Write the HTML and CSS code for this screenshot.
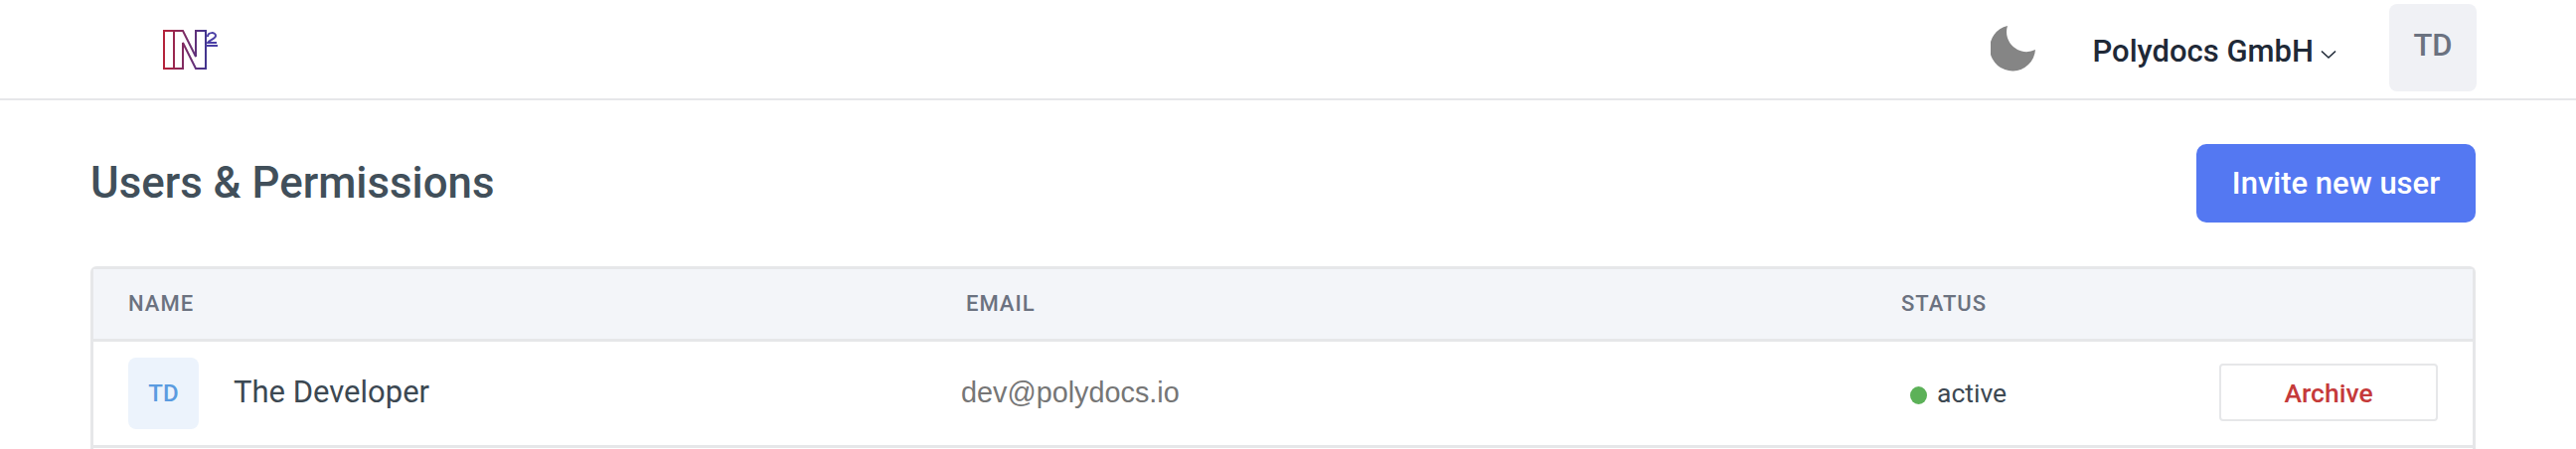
FILE: index.html
```html
<!DOCTYPE html>
<html>
<head>
    <title>Users &amp; Permissions</title>
    <link rel="stylesheet" href="styles.css">
</head>
<body>
    <header class="topbar">
        <a class="logo" href="#">
            <svg width="56" height="42" viewBox="0 0 56 42" fill="none">
                <defs>
                    <linearGradient id="logo-grad" x1="0" y1="0" x2="1" y2="0">
                        <stop offset="0" stop-color="#b5233a"/>
                        <stop offset="1" stop-color="#43358f"/>
                    </linearGradient>
                </defs>
                <path d="M1 2H11V40H1Z M11 40H20V14L33 40H43V2H33V28L20 2H11" stroke="url(#logo-grad)" stroke-width="2"/>
                <path d="M45 8C45 3 53 3 53 7C53 10 47 11 45 14H54" stroke="#4a3fa5" stroke-width="2"/>
                <path d="M43 17H55" stroke="#4a3fa5" stroke-width="2"/>
            </svg>
        </a>
        <div class="topbar-right">
            <svg class="moon" width="46" height="46" viewBox="0 0 46 46">
                <path d="M17 0A23 23 0 1 0 45 24A20 20 0 0 1 17 0Z" fill="#858585"/>
            </svg>
            <div class="org">
                <span>Polydocs GmbH</span>
                <svg width="16" height="10" viewBox="0 0 16 10" fill="none">
                    <path d="M1 1.500L8 8L15 1.500" stroke="#1f2937" stroke-width="1.600"/>
                </svg>
            </div>
            <div class="user-box">TD</div>
        </div>
    </header>

    <main class="content">
        <div class="page-head">
            <h1>Users &amp; Permissions</h1>
            <button class="invite-btn">Invite new user</button>
        </div>

        <div class="user-table">
            <div class="table-row table-head">
                <div>NAME</div>
                <div>EMAIL</div>
                <div>STATUS</div>
                <div></div>
            </div>
            <div class="table-row user-row">
                <div class="name-cell">
                    <div class="avatar">TD</div>
                    <span class="name-text">The Developer</span>
                </div>
                <div class="email-cell">dev@polydocs.io</div>
                <div class="status-cell"><span class="dot"></span>active</div>
                <div class="action-cell"><button class="archive-btn">Archive</button></div>
            </div>
        </div>
    </main>
</body>
</html>
```

FILE: styles.css
```css
html, body {
    height: 100%;
    margin: 0;
    overflow: hidden;
}

body {
    font-family: Roboto, "Liberation Sans", sans-serif;
    background-color: #fff;
    color: #3c4852;
}

.topbar {
    display: flex;
    justify-content: space-between;
    height: 99px;
    padding: 0 100px 0 164px;
    border-bottom: 2px solid #e6e7e9;
}

.logo {
    display: flex;
    align-items: center;
}

.topbar-right {
    display: flex;
    align-items: center;
}

.moon {
    margin: 0 57px 2px 0;
}

.org {
    display: flex;
    align-items: center;
    gap: 7px;
    margin: 3px 53px 0 0;
    font-size: 31px;
    font-weight: 500;
    color: #1f2937;
}

.org svg {
    margin-top: 8px;
}

.user-box {
    display: flex;
    align-items: center;
    justify-content: center;
    width: 88px;
    height: 88px;
    margin-bottom: 4px;
    padding-bottom: 4px;
    box-sizing: border-box;
    background-color: #f0f1f5;
    border-radius: 8px;
    font-size: 31px;
    font-weight: 500;
    color: #6b7280;
}

.content {
    padding: 44px 101px 0 91px;
}

.page-head {
    display: flex;
    justify-content: space-between;
    align-items: center;
    margin-bottom: 44px;
}

h1 {
    margin: 0 0 2px;
    font-size: 43.800px;
    font-weight: 500;
    color: #414f5a;
}

.invite-btn {
    width: 281px;
    height: 79px;
    border: none;
    border-radius: 10px;
    background-color: #5478f2;
    color: #fff;
    font-family: inherit;
    font-size: 31px;
    font-weight: 500;
}

.user-table {
    height: 300px;
    border: 3px solid #e6e7e9;
    border-bottom: none;
    border-radius: 6px 6px 0 0;
}

.table-row {
    display: grid;
    grid-template-columns: 843px 941px 320px 1fr;
    align-items: center;
    padding-left: 35px;
    border-bottom: 3px solid #e6e7e9;
}

.table-head {
    height: 73px;
    box-sizing: border-box;
    padding-bottom: 2px;
    background-color: #f3f5f9;
    font-size: 22px;
    font-weight: 500;
    letter-spacing: 1px;
    color: #6b7280;
}

.user-row {
    height: 104px;
}

.name-cell {
    display: flex;
    align-items: center;
    gap: 35px;
    font-size: 31px;
}

.name-text {
    margin-bottom: 4px;
}

.avatar {
    display: flex;
    align-items: center;
    justify-content: center;
    width: 71px;
    height: 72px;
    background-color: #ecf3fc;
    border-radius: 8px;
    font-size: 24px;
    font-weight: 500;
    color: #5a9be0;
}

.email-cell {
    margin: 0 0 2px -5px;
    font-family: "Liberation Sans", sans-serif;
    font-size: 28.800px;
    color: #767676;
}

.status-cell {
    display: flex;
    align-items: center;
    margin: 0 0 2px 9px;
    font-size: 26.500px;
}

.dot {
    width: 17px;
    height: 18px;
    margin: 6px 10px 0 0;
    border-radius: 50%;
    background-color: #5cb158;
}

.archive-btn {
    width: 220px;
    height: 58px;
    margin-bottom: 2px;
    border: 2px solid #e6e7e9;
    border-radius: 4px;
    background-color: #fff;
    color: #c53a3a;
    font-family: inherit;
    font-size: 26.500px;
    font-weight: 500;
}
```
